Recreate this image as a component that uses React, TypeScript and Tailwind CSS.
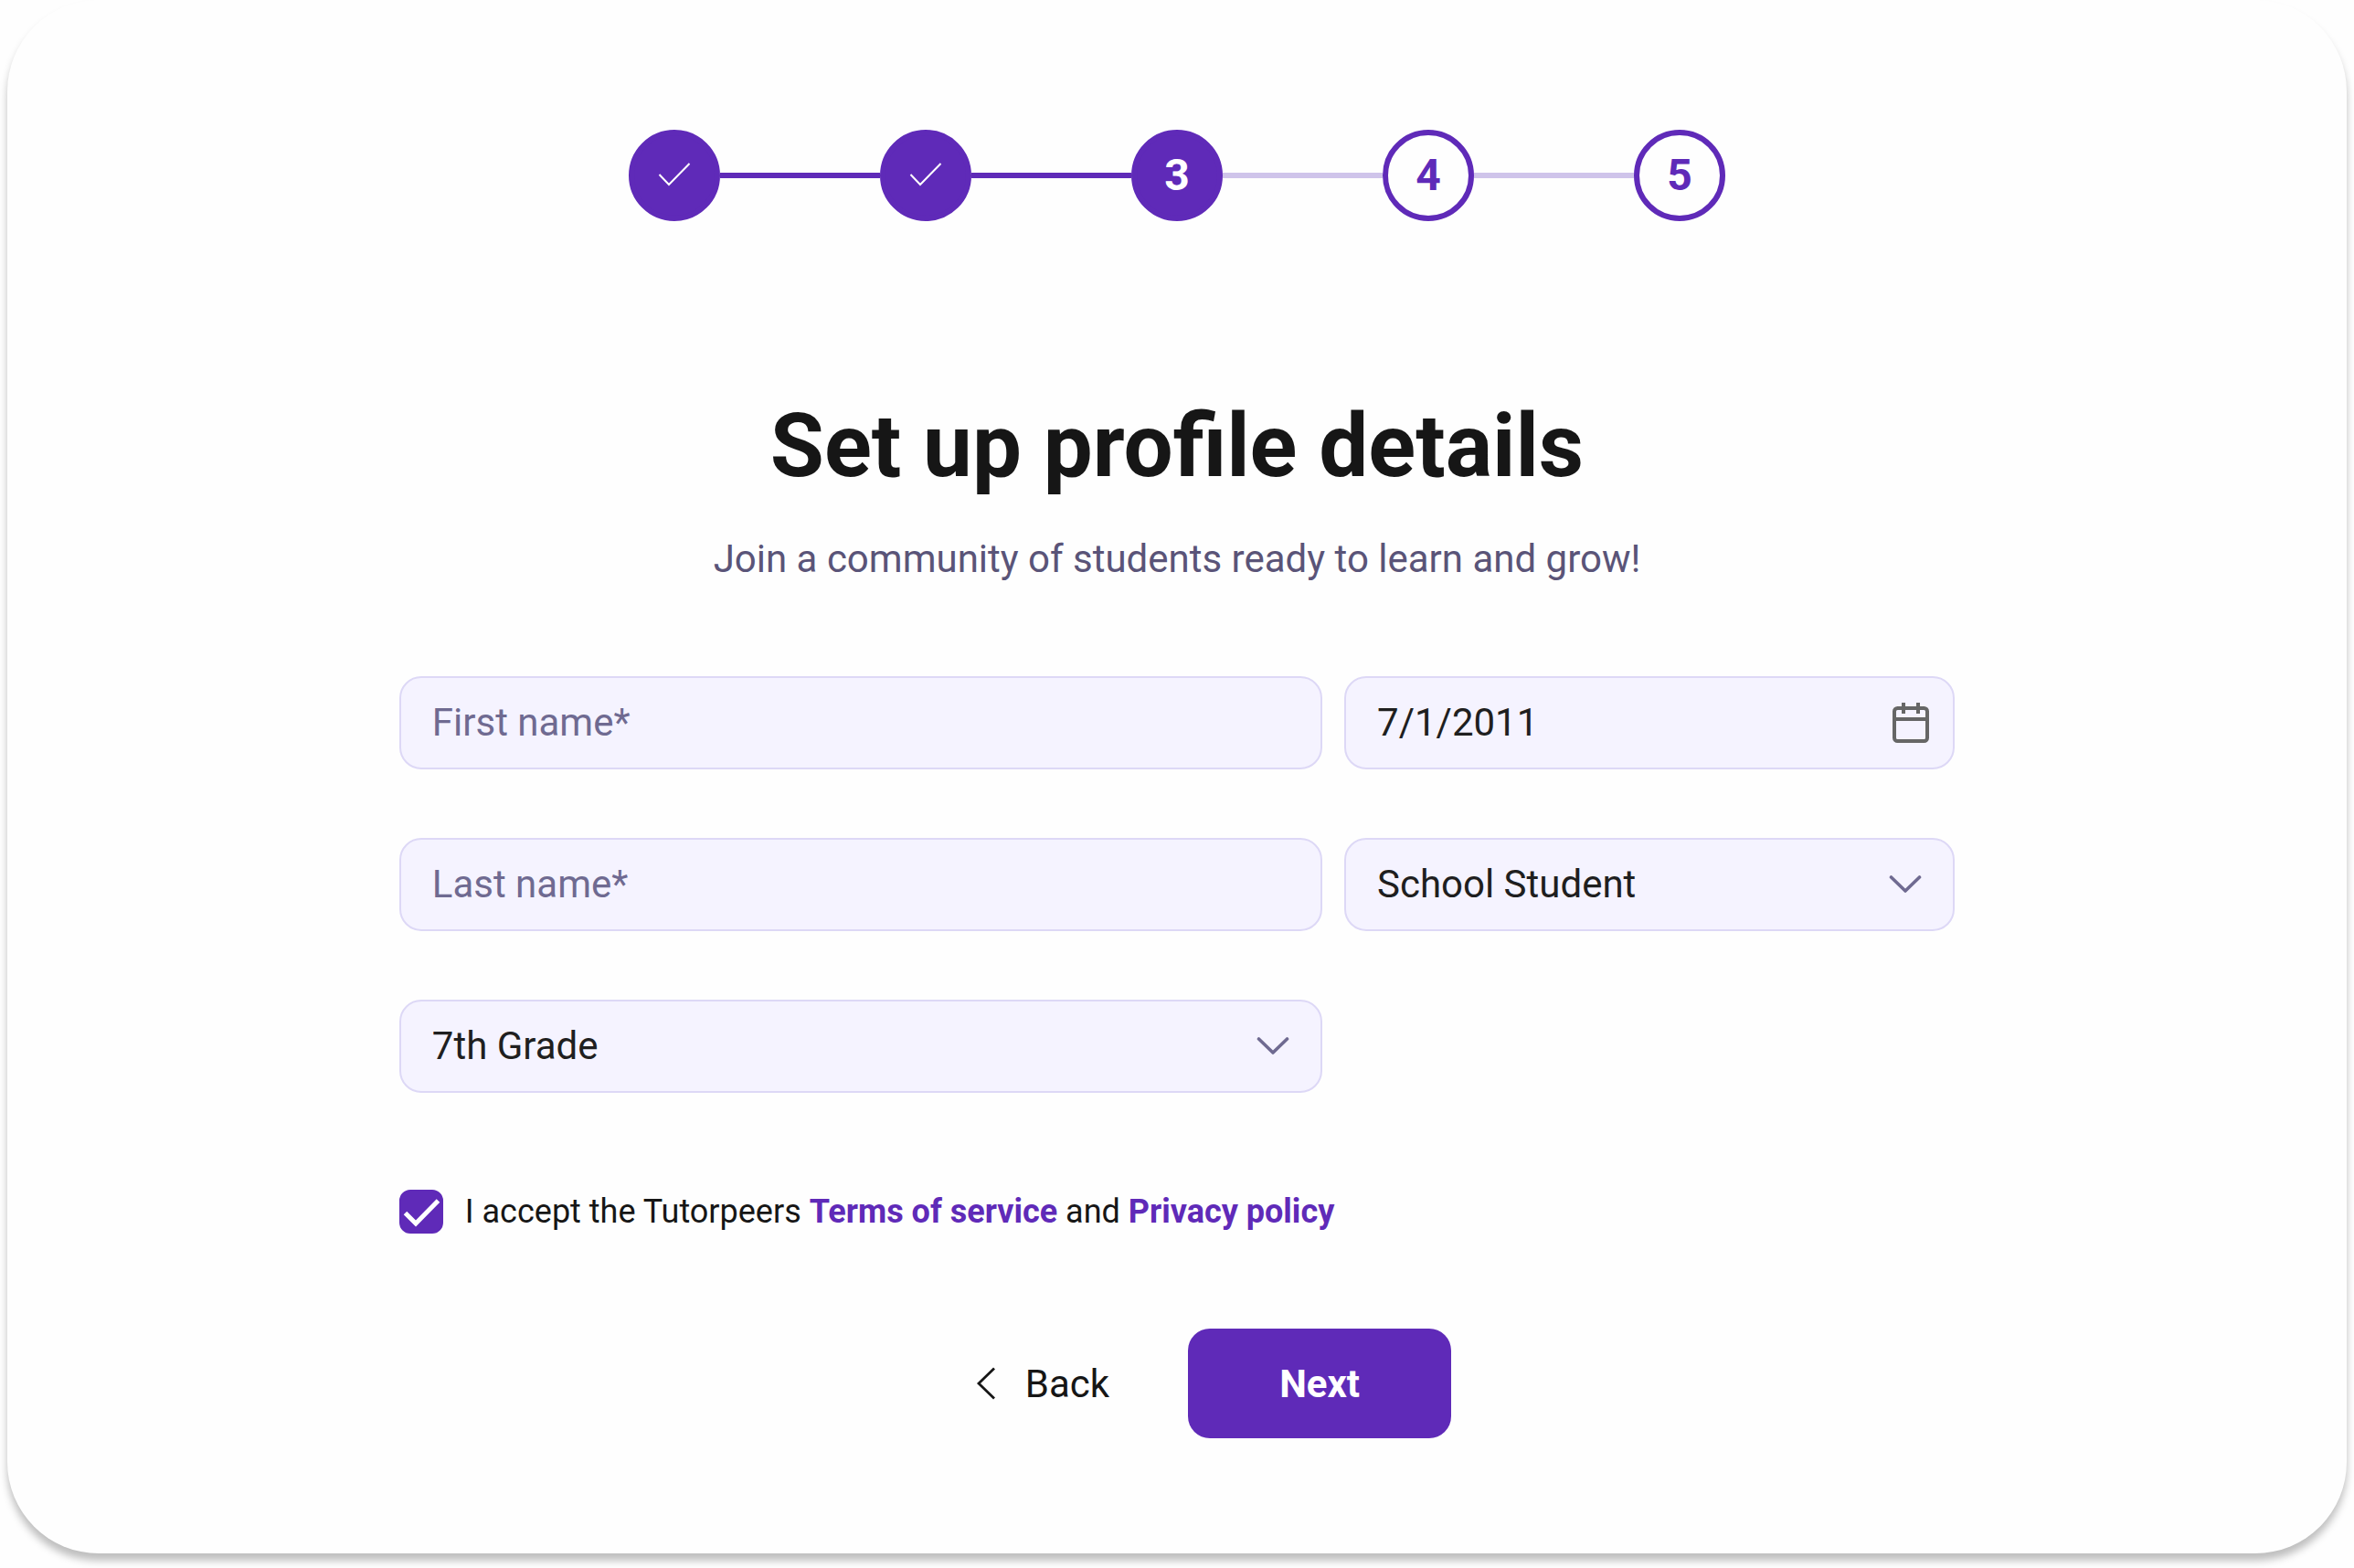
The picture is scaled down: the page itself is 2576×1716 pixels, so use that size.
import { useState } from "react";
import type { ReactNode } from "react";
import { clsx } from "clsx";

const steps = [1, 2, 3, 4, 5];
const currentStep = 3;

const fieldClass =
  "h-[102px] w-full appearance-none rounded-3xl border-2 border-[#ddd8f6] bg-[#f5f3ff] px-[34px] pb-0.5 text-[42px] text-[#1f1f1f] outline-none placeholder:text-[#6f6a91] placeholder:opacity-100 focus:border-[#5f2ab8]";

function StepCheck() {
  return (
    <svg viewBox="0 0 36 28" className="h-7 w-9" fill="none" stroke="white" strokeWidth="2" aria-hidden="true">
      <path d="M1.5 13 12 24 34.5 1" />
    </svg>
  );
}

function ChevronDown() {
  return (
    <svg
      viewBox="0 0 36 20"
      className="h-5 w-9"
      fill="none"
      stroke="#6f6a91"
      strokeWidth="3.6"
      strokeLinecap="round"
      strokeLinejoin="round"
      aria-hidden="true"
    >
      <path d="M2.5 2 18 17 33.5 2" />
    </svg>
  );
}

function Stepper() {
  return (
    <ol className="flex items-center justify-center">
      {steps.map((step) => (
        <li key={step} className="flex items-center">
          {step > 1 ? (
            <span className={clsx("h-1.5 w-[175px]", step <= currentStep ? "bg-[#5f2ab8]" : "bg-[#cfc4ea]")} />
          ) : null}
          <span
            className={clsx(
              "flex size-[100px] items-center justify-center rounded-full border-6 border-[#5f2ab8] text-5xl font-bold",
              step <= currentStep ? "bg-[#5f2ab8] text-white" : "text-[#5f2ab8]"
            )}
          >
            {step < currentStep ? <StepCheck /> : step}
          </span>
        </li>
      ))}
    </ol>
  );
}

function SelectField({ label, children }: { label: string; children: ReactNode }) {
  return (
    <div className="grid items-center">
      <select aria-label={label} className={clsx(fieldClass, "col-start-1 row-start-1")}>
        {children}
      </select>
      <span className="pointer-events-none col-start-1 row-start-1 mr-9 justify-self-end">
        <ChevronDown />
      </span>
    </div>
  );
}

export default function App() {
  const [birthDate, setBirthDate] = useState("7/1/2011");
  const [accepted, setAccepted] = useState(true);

  return (
    <main className="bg-[#fefefe] px-2 pb-4 font-[Roboto,sans-serif] text-[#161616]">
      <form
        className="rounded-[100px] bg-[#fefefe] px-[16.75%] pt-[142px] pb-[126px] shadow-[0_8px_8px_rgba(0,0,0,0.25)]"
        onSubmit={(event) => event.preventDefault()}
      >
        <Stepper />

        <h1 className="mt-[190px] text-center text-8xl leading-28 font-bold">Set up profile details</h1>
        <p className="mt-10 text-center text-[42px] leading-14 text-[#5a5478]">
          Join a community of students ready to learn and grow!
        </p>

        <div className="mt-[100px] grid grid-cols-[1010fr_668fr] gap-x-6 gap-y-[75px]">
          <input className={fieldClass} aria-label="First name" placeholder="First name*" />
          <div className="grid items-center">
            <input
              className={clsx(fieldClass, "col-start-1 row-start-1")}
              aria-label="Date of birth"
              value={birthDate}
              onChange={(event) => setBirthDate(event.target.value)}
            />
            <button type="button" aria-label="Choose date" className="col-start-1 row-start-1 mr-7 justify-self-end">
              <svg viewBox="0 0 40 44" className="h-11 w-10" fill="none" stroke="#666666" strokeWidth="4" aria-hidden="true">
                <rect x="2" y="6" width="36" height="36" rx="3.5" />
                <path d="M2 18h36M12 0v12M28 0v12" />
              </svg>
            </button>
          </div>

          <input className={fieldClass} aria-label="Last name" placeholder="Last name*" />
          <SelectField label="Role">
            <option>School Student</option>
            <option>University Student</option>
          </SelectField>

          <SelectField label="Grade">
            <option>7th Grade</option>
            <option>8th Grade</option>
            <option>9th Grade</option>
          </SelectField>
        </div>

        <div className="mt-[106px] flex items-center gap-6">
          <span className="grid size-12 shrink-0">
            <input
              id="terms"
              type="checkbox"
              checked={accepted}
              onChange={(event) => setAccepted(event.target.checked)}
              className="col-start-1 row-start-1 size-12 appearance-none rounded-xl border-2 border-[#5f2ab8] checked:bg-[#5f2ab8]"
            />
            {accepted ? (
              <svg
                viewBox="0 0 48 48"
                className="pointer-events-none col-start-1 row-start-1 size-12"
                fill="none"
                stroke="white"
                strokeWidth="5"
                aria-hidden="true"
              >
                <path d="M6.5 25.5 18 37 42.5 12" />
              </svg>
            ) : null}
          </span>
          <label htmlFor="terms" className="text-4xl leading-12">
            I accept the Tutorpeers{" "}
            <a href="#terms-of-service" className="font-bold text-[#5f2ab8]">
              Terms of service
            </a>{" "}
            and{" "}
            <a href="#privacy-policy" className="font-bold text-[#5f2ab8]">
              Privacy policy
            </a>
          </label>
        </div>

        <div className="mt-[104px] flex items-center justify-center">
          <button type="button" className="flex h-[120px] items-center gap-8 pr-[86px] pl-20 text-[42px]">
            <svg viewBox="0 0 22 36" className="h-9 w-[22px]" fill="none" stroke="currentColor" strokeWidth="2.8" aria-hidden="true">
              <path d="M20 1.5 3 18 20 34.5" />
            </svg>
            Back
          </button>
          <button type="submit" className="h-[120px] w-72 rounded-3xl bg-[#5f2ab8] text-[42px] font-bold text-white">
            Next
          </button>
        </div>
      </form>
    </main>
  );
}
